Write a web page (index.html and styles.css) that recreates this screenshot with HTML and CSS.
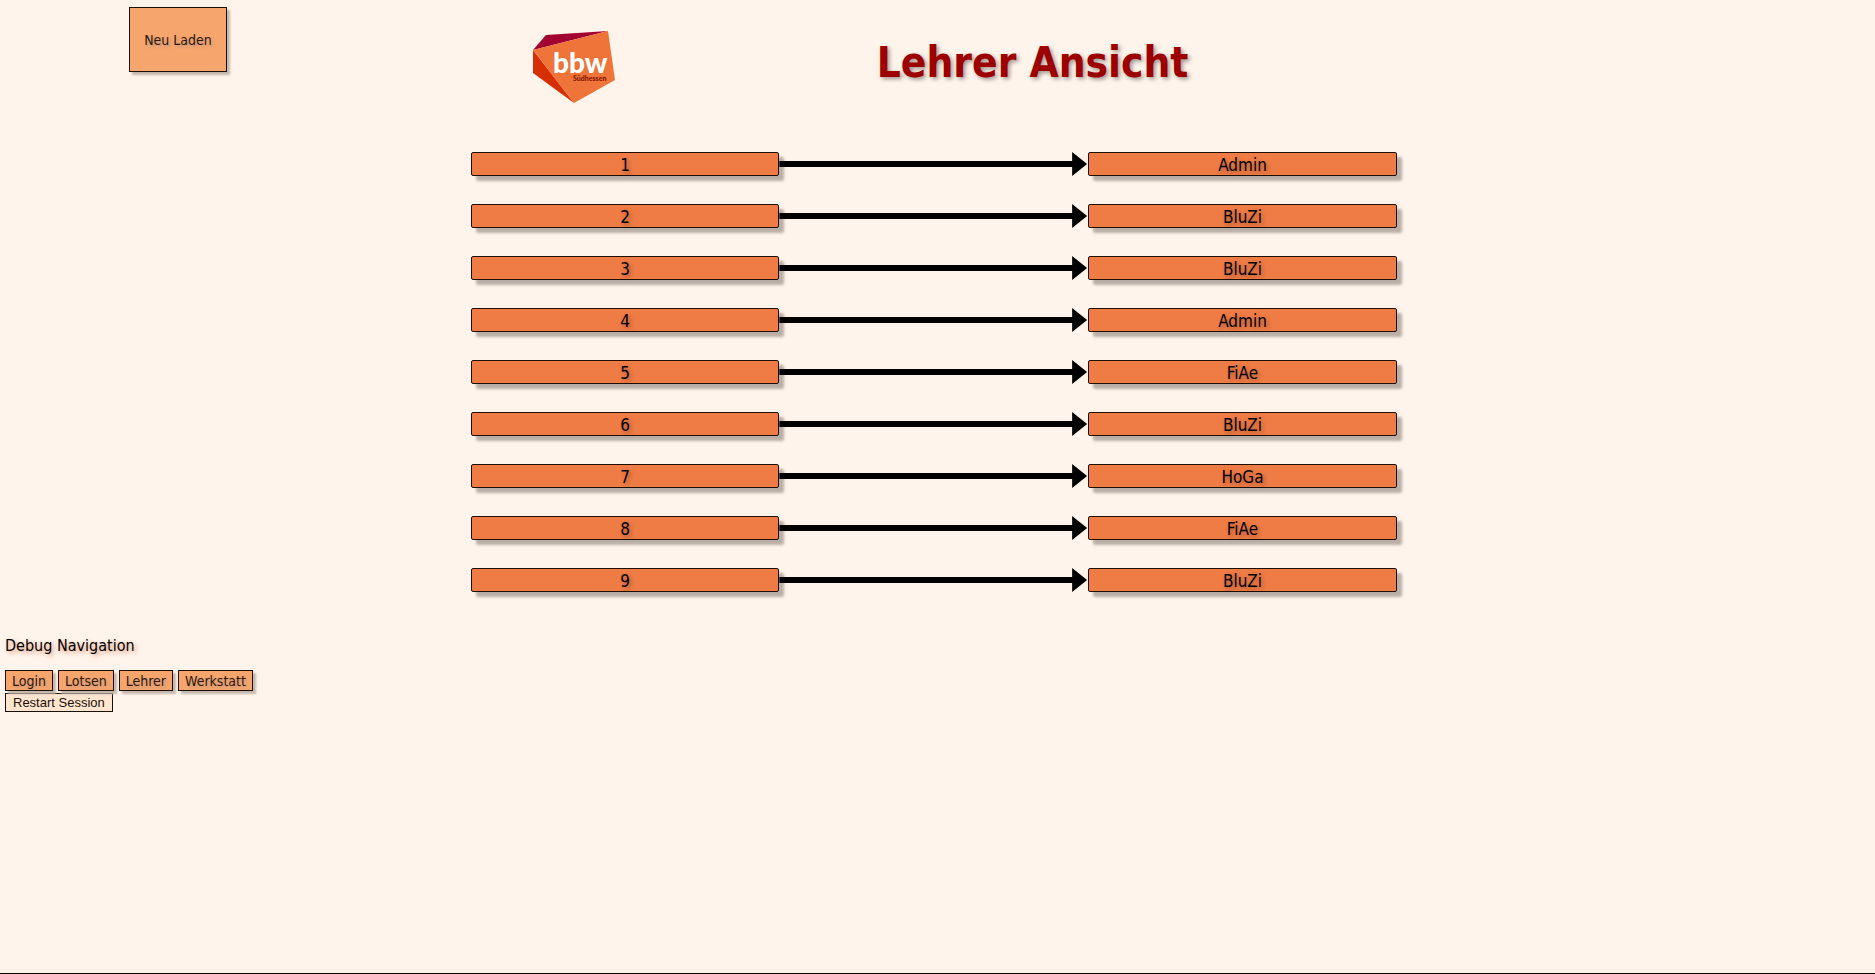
FILE: index.html
```html
<!DOCTYPE html>
<html lang="de">
<head>
<meta charset="utf-8">
<title>Lehrer Ansicht</title>
<link rel="stylesheet" href="styles.css">
</head>
<body>
<header class="header">
  <button class="button reload" type="button">Neu Laden</button>
  <svg class="logo" viewBox="0 0 84 76" role="img" aria-label="bbw Südhessen">
    <path fill="#a30331" d="M1 20 14 5 76 1Z"/>
    <path fill="#d72f05" d="M1 20V43L42 73Z"/>
    <path fill="#ee7439" d="M1 20 76 1 83 50 42 73Z"/>
    <text class="logo-name" x="21" y="43">bbw</text>
    <text class="logo-place" x="41" y="51">Südhessen</text>
  </svg>
  <h1 class="title">Lehrer Ansicht</h1>
</header>
<main class="list">
  <div class="row"><div class="box">1</div><div class="arrow"></div><div class="box">Admin</div></div>
  <div class="row"><div class="box">2</div><div class="arrow"></div><div class="box">BluZi</div></div>
  <div class="row"><div class="box">3</div><div class="arrow"></div><div class="box">BluZi</div></div>
  <div class="row"><div class="box">4</div><div class="arrow"></div><div class="box">Admin</div></div>
  <div class="row"><div class="box">5</div><div class="arrow"></div><div class="box">FiAe</div></div>
  <div class="row"><div class="box">6</div><div class="arrow"></div><div class="box">BluZi</div></div>
  <div class="row"><div class="box">7</div><div class="arrow"></div><div class="box">HoGa</div></div>
  <div class="row"><div class="box">8</div><div class="arrow"></div><div class="box">FiAe</div></div>
  <div class="row"><div class="box">9</div><div class="arrow"></div><div class="box">BluZi</div></div>
</main>
<footer class="debug">
  <p class="debug-title">Debug Navigation</p>
  <nav class="debug-nav">
    <button class="button" type="button">Login</button>
    <button class="button" type="button">Lotsen</button>
    <button class="button" type="button">Lehrer</button>
    <button class="button" type="button">Werkstatt</button>
  </nav>
  <button class="restart" type="button">Restart Session</button>
</footer>
</body>
</html>
```
FILE: styles.css
```css
* {
  box-sizing: border-box;
}

body {
  display: flex;
  flex-direction: column;
  min-height: 100vh;
  margin: 0;
  border-bottom: 1px solid #000;
  background: #fff4eb;
  color: #000;
  font-family: Tahoma, "DejaVu Sans Condensed", "DejaVu Sans", sans-serif;
  font-size: 16px;
}

.header {
  display: grid;
  grid-template-columns: 28.36% 18.4% 1fr;
  align-items: start;
  padding-top: 7px;
}

.button {
  height: 21px;
  padding: 1px 6px 0;
  border: 1px solid #1c0f06;
  background: #f6a56d;
  color: #2a170b;
  font: inherit;
  font-size: 14px;
  line-height: 18px;
  text-shadow: 2px 2px 3px rgba(130, 130, 150, 0.4);
  box-shadow: 3px 3px 2px #c5b7ae;
}

.reload {
  width: 98px;
  height: 65px;
  margin-left: 129px;
}

.logo {
  width: 84px;
  height: 76px;
  margin-top: 23px;
}

.logo-name {
  fill: #fff;
  font: 900 28px Lato, sans-serif;
}

.logo-place {
  fill: #861405;
  font: 900 7px Lato, sans-serif;
}

.title {
  margin: 30px 0 0;
  color: #9d0000;
  font-size: 42px;
  line-height: 52px;
  text-shadow: 2px 2px 4px rgba(0, 0, 0, 0.4);
}

.list {
  display: grid;
  gap: 28px;
  width: 49.4%;
  margin: 46px 0 0 25.1%;
}

.row {
  display: grid;
  grid-template-columns: repeat(3, 1fr);
  height: 24px;
}

.box {
  height: 24px;
  border: 1px solid #1c0f06;
  border-radius: 2px;
  background: #ef7b45;
  box-shadow: 5px 5px 3px #b9aea6;
  font-size: 17px;
  line-height: 24px;
  text-align: center;
  text-shadow: 2px 2px 4px rgba(0, 0, 0, 0.3);
}

.arrow {
  z-index: 1;
  margin-right: 1px;
  background: #000;
  clip-path: polygon(0 9px, calc(100% - 15px) 9px, calc(100% - 15px) 0, 100% 50%, calc(100% - 15px) 100%, calc(100% - 15px) 15px, 0 15px);
}

.debug {
  margin: 44px 0 0 5px;
}

.debug-title {
  margin: 0 0 14px;
  line-height: 20px;
  text-shadow: 2px 2px 4px rgba(200, 80, 30, 0.6);
}

.debug-nav {
  display: flex;
  gap: 5px;
  margin-bottom: 2px;
}

.restart {
  display: block;
  height: 19px;
  padding: 0 7px;
  border: 1px solid #1c0f06;
  background: #ffe5d0;
  color: #1c0f06;
  font: 13px/17px "Liberation Sans", Arial, sans-serif;
}
```
